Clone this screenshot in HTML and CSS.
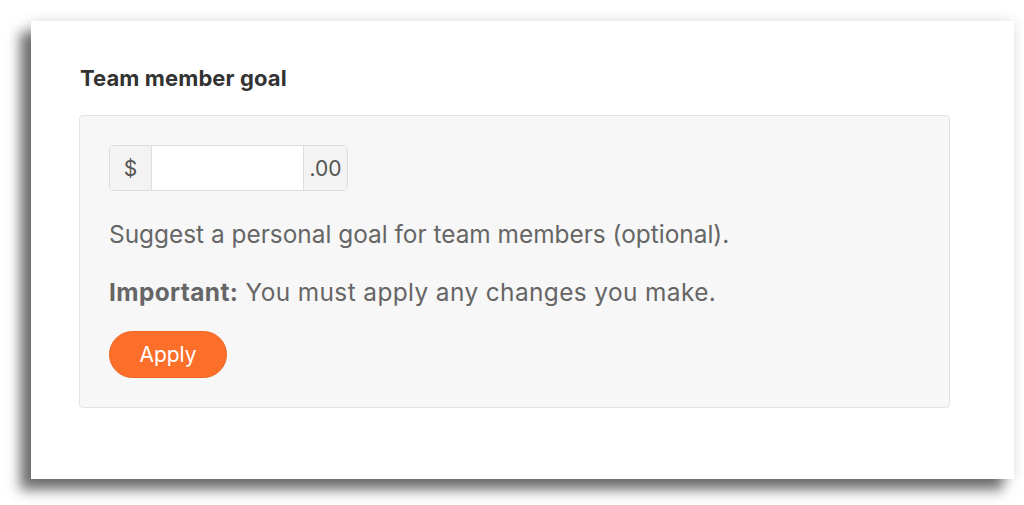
FILE: index.html
```html
<!DOCTYPE html>
<html lang="en">
<head>
<meta charset="utf-8">
<title>Team member goal</title>
<link rel="stylesheet" href="styles.css">
</head>
<body>
<div class="page">
  <section class="card">
    <h2 class="card-title">Team member goal</h2>
    <div class="panel">
      <div class="input-group">
        <span class="addon addon-left">$</span>
        <input class="amount" type="text" aria-label="Goal amount">
        <span class="addon addon-right">.00</span>
      </div>
      <p class="help">Suggest a personal goal for team members (optional).</p>
      <p class="help help-note"><strong>Important:</strong> You must apply any changes you make.</p>
      <button class="btn-apply" type="button">Apply</button>
    </div>
  </section>
</div>
</body>
</html>
```

FILE: styles.css
```css
* { box-sizing: border-box; }
html, body { margin: 0; padding: 0; background: #ffffff; }
body {
  font-family: "Inter", "Liberation Sans", sans-serif;
  color: #333;
}
.page {
  padding: 21px 10px 0 31px;
  height: 505px;
}
.card {
  width: 983px;
  height: 458px;
  background: #fff;
  box-shadow: -11px 11px 12px rgba(0,0,0,0.55), 0 0 12px rgba(0,0,0,0.12);
  padding: 42px 0 0 48px;
}
.card-title {
  margin: 0 0 22px 1px;
  font-size: 22px;
  line-height: 30px;
  font-weight: 700;
  letter-spacing: 0.1px;
  color: #333;
}
.panel {
  width: 871px;
  height: 293px;
  background: #f7f7f7;
  border: 1px solid #e3e3e3;
  border-radius: 4px;
  padding: 29px 29px;
  display: flex;
  flex-direction: column;
  align-items: flex-start;
}
.input-group {
  display: flex;
  height: 47px;
  border: 1px solid #dedede;
  border-radius: 4px;
  overflow: hidden;
}
.addon {
  display: flex;
  align-items: center;
  justify-content: center;
  background: #f3f3f3;
  color: #555;
  font-size: 21px;
}
.addon-left { width: 42px; border-right: 1px solid #dedede; }
.addon-right { width: 44px; border-left: 1px solid #dedede; }
.amount {
  width: 151px;
  border: 0;
  margin: 0;
  padding: 0 10px;
  background: #fff;
  font: inherit;
  outline: none;
}
.help {
  margin: 0;
  font-size: 24.4px;
  line-height: 32px;
  color: #666;
}
.help:first-of-type { margin-top: 27px; }
.help + .help { margin-top: 26px; }
.help-note { letter-spacing: 0.4px; }
.help strong { color: #666; font-weight: 700; }
.btn-apply {
  margin-top: 23px;
  width: 118px;
  height: 48px;
  border: 1px solid #ee6420;
  border-radius: 24px;
  background: #fb6f2a;
  color: #fff;
  font-family: inherit;
  font-size: 21px;
  padding: 0;
}
```
